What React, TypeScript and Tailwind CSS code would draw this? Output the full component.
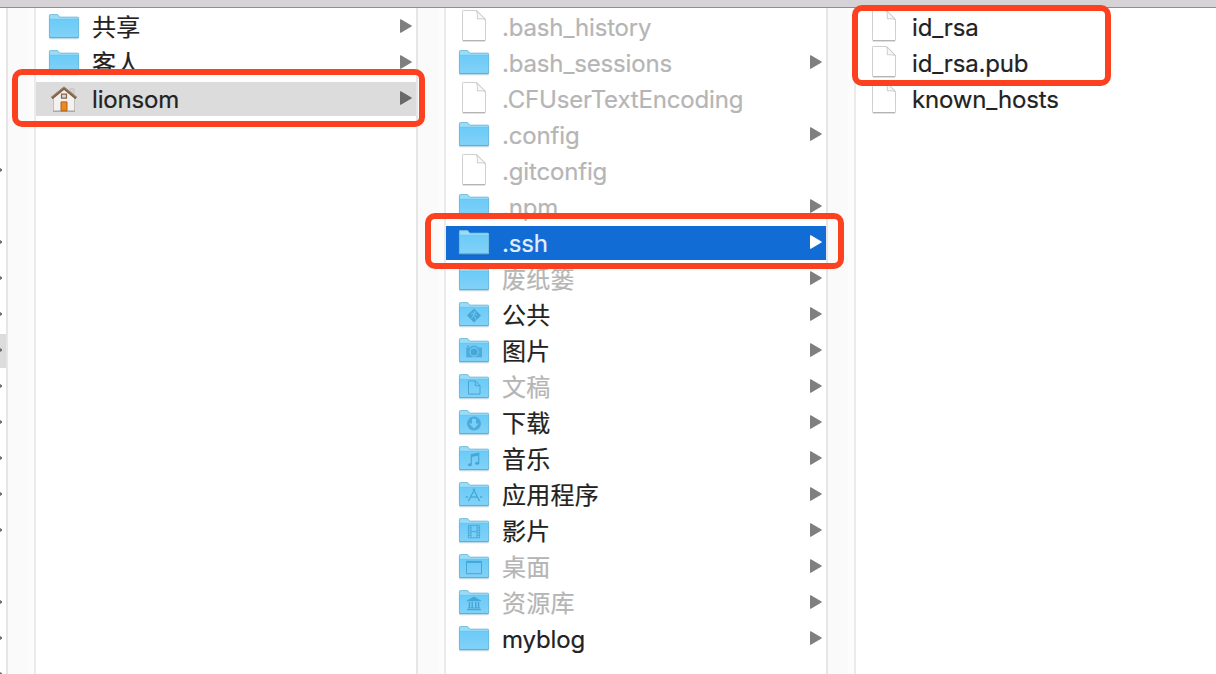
import React from "react";

type Glyph = "public" | "pictures" | "documents" | "downloads" | "music" | "apps" | "movies" | "desktop" | "library";
type Entry = {
  name: string;
  kind?: "folder" | "file" | "home";
  glyph?: Glyph;
  dim?: boolean;
  selected?: "gray" | "blue";
};

const INK = "#46a6d6";

function FolderGlyph({ glyph }: { glyph: Glyph }) {
  switch (glyph) {
    case "public":
      return (
        <g>
          <path d="M15 6.5 22 13.5 15 20.5 8 13.5z" fill={INK} />
          <circle cx="15.8" cy="10.2" r="1" fill="#6fc9f2" />
          <path d="M12 12.2l2.3-1 1.8 1.3 2 .6M14.6 11.4l-.4 3-2.2 2M14.4 14.2l2 1 .4 2.4" stroke="#6fc9f2" strokeWidth="1" fill="none" />
        </g>
      );
    case "pictures":
      return (
        <g>
          <path d="M7.2 9.5h4.2l1.4-1.8h4.8L19 9.5h4v9.8H7.2z" fill={INK} opacity=".85" />
          <path d="M8.2 8.4h2.2" stroke={INK} strokeWidth="1.2" />
          <circle cx="15.1" cy="14" r="4.1" fill={INK} stroke="#74cbf3" strokeWidth="1.1" />
        </g>
      );
    case "documents":
      return <path d="M9.5 6.9h7l4.5 4.6v8.6H9.5zM16.3 7v4.7H21" fill="none" stroke={INK} strokeWidth="1" />;
    case "downloads":
      return (
        <g>
          <circle cx="15" cy="13.6" r="7" fill={INK} opacity=".9" />
          <path d="M13 8.8h4v4.6h3L15 18.6l-5-5.2h3z" fill="#79cff6" />
        </g>
      );
    case "music":
      return (
        <g>
          <path d="M12.3 18.3V8.8l7.4-1.5v9.5" fill="none" stroke={INK} strokeWidth="1.2" />
          <path d="M12.3 8.8l7.4-1.5v2.2l-7.4 1.5z" fill={INK} />
          <ellipse cx="10.9" cy="18.8" rx="2" ry="1.5" fill={INK} />
          <ellipse cx="18.2" cy="17.3" rx="2" ry="1.5" fill={INK} />
        </g>
      );
    case "apps":
      return (
        <g fill="none" stroke={INK}>
          <path d="M15.9 6.8 9.4 19M14.1 6.8 20.6 19" strokeWidth="1.3" />
          <path d="M11.2 15h7" strokeWidth="1.3" />
          <path d="M6.8 15h2M21.2 15h2" strokeWidth="1.4" />
        </g>
      );
    case "movies":
      return (
        <path
          d="M9.4 7.4h11.2v12.4H9.4zM12 7.4v12.4M18 7.4v12.4M12 13.6h6M9.4 9.9H12M9.4 12.4H12M9.4 14.9H12M9.4 17.4H12M18 9.9h2.6M18 12.4h2.6M18 14.9h2.6M18 17.4h2.6"
          fill="none"
          stroke={INK}
          strokeWidth=".9"
        />
      );
    case "desktop":
      return (
        <g>
          <path d="M7.5 7.3h15v12.4h-15z" fill="none" stroke={INK} strokeWidth="1" />
          <path d="M7.5 8h15" stroke={INK} strokeWidth="1.8" />
        </g>
      );
    case "library":
      return (
        <g fill={INK}>
          <path d="M15 6.6 22 10.4v.9H8v-.9z" />
          <path d="M9.7 12.1h1.5v5.4H9.7zM12.5 12.1H14v5.4h-1.5zM16 12.1h1.5v5.4H16zM18.8 12.1h1.5v5.4h-1.5zM8.8 17.5h12.4v1H8.8zM8 19h14v1.2H8z" />
        </g>
      );
  }
}

function FolderIcon({ glyph }: { glyph?: Glyph }) {
  return (
    <svg width="32" height="28" viewBox="-1 -1 32 28" className="shrink-0">
      <defs>
        <linearGradient id="folderFront" x1="0" y1="0" x2="0" y2="1">
          <stop offset="0" stopColor="#6bcbf8" />
          <stop offset="1" stopColor="#83d2f7" />
        </linearGradient>
      </defs>
      <path d="M.5 24.8h29.2" stroke="#000" strokeOpacity=".16" strokeWidth="1" />
      <path d="M0 1.6Q0 .3 1.2.3h7.3c1 0 1.2 2.6 2.6 2.6h17.7q1.2 0 1.2 1.2v19.6H0z" fill="#9adcf8" />
      <path d="M0 5.3h30V23q0 1.2-1.2 1.2H1.2Q0 24.2 0 23z" fill="url(#folderFront)" />
      <path d="M.4 23V1.8Q.4.6 1.4.6h7c.9 0 1.3 2.5 2.7 2.5h17.5q1 0 1 1.1V23" fill="none" stroke="#69b6d8" strokeWidth=".8" />
      <path d="M.5 5.3h29" stroke="#67bce4" strokeWidth=".6" />
      <path d="M.4 23.6h29.2" stroke="#5aacd2" strokeWidth="1" />
      {glyph && <FolderGlyph glyph={glyph} />}
    </svg>
  );
}

function FileIcon() {
  return (
    <svg width="26" height="34" viewBox="-1 0 26 34" className="shrink-0">
      <path d="M.5 31.4h23" stroke="#000" strokeOpacity=".1" />
      <path d="M.5 1.2Q.5.5 1.2.5h13.6l8.7 8.8v20.5q0 .8-.8.8H1.3q-.8 0-.8-.8z" fill="#fff" stroke="#cacaca" strokeWidth=".9" />
      <path d="M14.6.8q1.2 3.6.7 8 4-.4 8 .6z" fill="#f8f8f8" stroke="#c2c2c2" strokeWidth=".8" />
      <path d="M1 30.6h22" stroke="#adadad" strokeWidth=".9" />
    </svg>
  );
}

function HomeIcon() {
  return (
    <svg width="28" height="28" viewBox="0 -.6 28 28" className="shrink-0">
      <path d="M20 3h4v8h-4z" fill="#d6d4d2" stroke="#bdbbb9" strokeWidth=".6" />
      <path d="M3.5 12 14 3l10.5 9v13.3h-21z" fill="#f3f2f0" stroke="#b9b5b0" strokeWidth=".8" />
      <path d="M3 25.7h22" stroke="#9d9a96" strokeWidth=".9" />
      <path d="M1.8 12.6 14 2.6l12.2 10" fill="none" stroke="#80634b" strokeWidth="2.8" />
      <path d="M1.6 11.6 14 1.4l12.4 10.2" fill="none" stroke="#a98969" strokeWidth="1" />
      <path d="M11.5 8.6h5v4h-5z" fill="#d3dbe0" stroke="#8b6144" strokeWidth="1.2" />
      <path d="M11 16.3h6v9h-6z" fill="#ed8a1b" stroke="#a65c16" strokeWidth=".9" />
    </svg>
  );
}

function Arrow({ color }: { color: string }) {
  return (
    <svg width="12" height="14" viewBox="0 0 12 14" className="mb-0.5 shrink-0">
      <path d="M.6.8 11.2 7 .6 13.2z" fill={color} stroke={color} strokeWidth="1.2" strokeLinejoin="round" />
    </svg>
  );
}

function Row({ name, kind = "folder", glyph, dim, selected }: Entry) {
  const bg = selected === "blue" ? "bg-[#116cd6]" : selected === "gray" ? "bg-[#dcdcdc]" : "";
  const text = selected === "blue" ? "text-[#e3eefb]" : dim ? "text-[#b5b5b5]" : "text-[#222222]";
  const arrow = selected === "blue" ? "#ffffff" : selected === "gray" ? "#696969" : "#7f7f7f";
  const tracking = /^[\x20-\x7e]+$/.test(name) ? "tracking-[-0.16px]" : "tracking-[0.25px]";
  return (
    <li className={`flex h-[34px] items-center pl-3 pr-1 ${bg}`}>
      <span className="mr-3 flex w-8 shrink-0 items-center justify-center">
        {kind === "file" ? <FileIcon /> : kind === "home" ? <HomeIcon /> : <FolderIcon glyph={glyph} />}
      </span>
      <span className={`grow whitespace-nowrap pt-0.5 leading-[34px] [-webkit-text-stroke:0.2px] ${text} ${tracking}`}>{name}</span>
      {kind !== "file" && <Arrow color={arrow} />}
    </li>
  );
}

function Column({ entries, className }: { entries: Entry[]; className: string }) {
  return (
    <ul className={`flex flex-col gap-0.5 overflow-hidden bg-white pt-0.5 ${className}`}>
      {entries.map((e) => (
        <Row key={e.name} {...e} />
      ))}
    </ul>
  );
}

function Gutter() {
  return (
    <div className="flex w-[30px] shrink-0 justify-end border-x-2 border-l-[#e6e6e6] border-r-[#ebebeb] bg-[#fafafa]">
      <div className="w-1.5 bg-[#fcfcfc]" />
    </div>
  );
}

const users: Entry[] = [
  { name: "共享" },
  { name: "客人" },
  { name: "lionsom", kind: "home", selected: "gray" },
];

const home: Entry[] = [
  { name: ".bash_history", kind: "file", dim: true },
  { name: ".bash_sessions", dim: true },
  { name: ".CFUserTextEncoding", kind: "file", dim: true },
  { name: ".config", dim: true },
  { name: ".gitconfig", kind: "file", dim: true },
  { name: ".npm", dim: true },
  { name: ".ssh", selected: "blue" },
  { name: "废纸篓", dim: true },
  { name: "公共", glyph: "public" },
  { name: "图片", glyph: "pictures" },
  { name: "文稿", glyph: "documents", dim: true },
  { name: "下载", glyph: "downloads" },
  { name: "音乐", glyph: "music" },
  { name: "应用程序", glyph: "apps" },
  { name: "影片", glyph: "movies" },
  { name: "桌面", glyph: "desktop", dim: true },
  { name: "资源库", glyph: "library", dim: true },
  { name: "myblog" },
];

const ssh: Entry[] = [
  { name: "id_rsa", kind: "file" },
  { name: "id_rsa.pub", kind: "file" },
  { name: "known_hosts", kind: "file" },
];

const rootArrows = [4, 6, 7, 8, 9, 10, 11, 12, 13, 14, 16, 17, 18];

function RootColumn() {
  return (
    <div className="flex w-1.5 shrink-0 flex-col gap-0.5 overflow-hidden bg-white pt-0.5">
      {Array.from({ length: 19 }, (_, i) => (
        <div key={i} className={`flex h-[34px] shrink-0 items-center ${i === 9 ? "bg-[#dcdcdc]" : ""}`}>
          {rootArrows.includes(i) && (
            <svg width="2" height="4" viewBox="0 0 2 4" className="mb-0.5">
              <path d="M0 0 2 1.2v1.6L0 4z" fill="#6f6f6f" />
            </svg>
          )}
        </div>
      ))}
    </div>
  );
}

export default function App() {
  return (
    <div className="relative flex h-[674px] w-[1216px] flex-col overflow-hidden bg-white font-['Inter','Noto_Sans_CJK_SC',sans-serif] text-[24px]">
      <div className="h-2 shrink-0 border-b border-[#8f8f8f] bg-[#d5d3d6]" />
      <div className="flex min-h-0 grow">
        <RootColumn />
        <Gutter />
        <Column entries={users} className="w-[380px] shrink-0" />
        <Gutter />
        <Column entries={home} className="w-[380px] shrink-0" />
        <Gutter />
        <Column entries={ssh} className="grow" />
      </div>
      <div className="absolute left-[12px] top-[69px] h-[58px] w-[413px] rounded-[10px] border-[6px] border-[#fc4120]" />
      <div className="absolute left-[425px] top-[213px] h-[56px] w-[419px] rounded-[10px] border-[6px] border-[#fc4120]" />
      <div className="absolute left-[852px] top-[5px] h-[81px] w-[259px] rounded-[10px] border-[6px] border-[#fc4120]" />
    </div>
  );
}
